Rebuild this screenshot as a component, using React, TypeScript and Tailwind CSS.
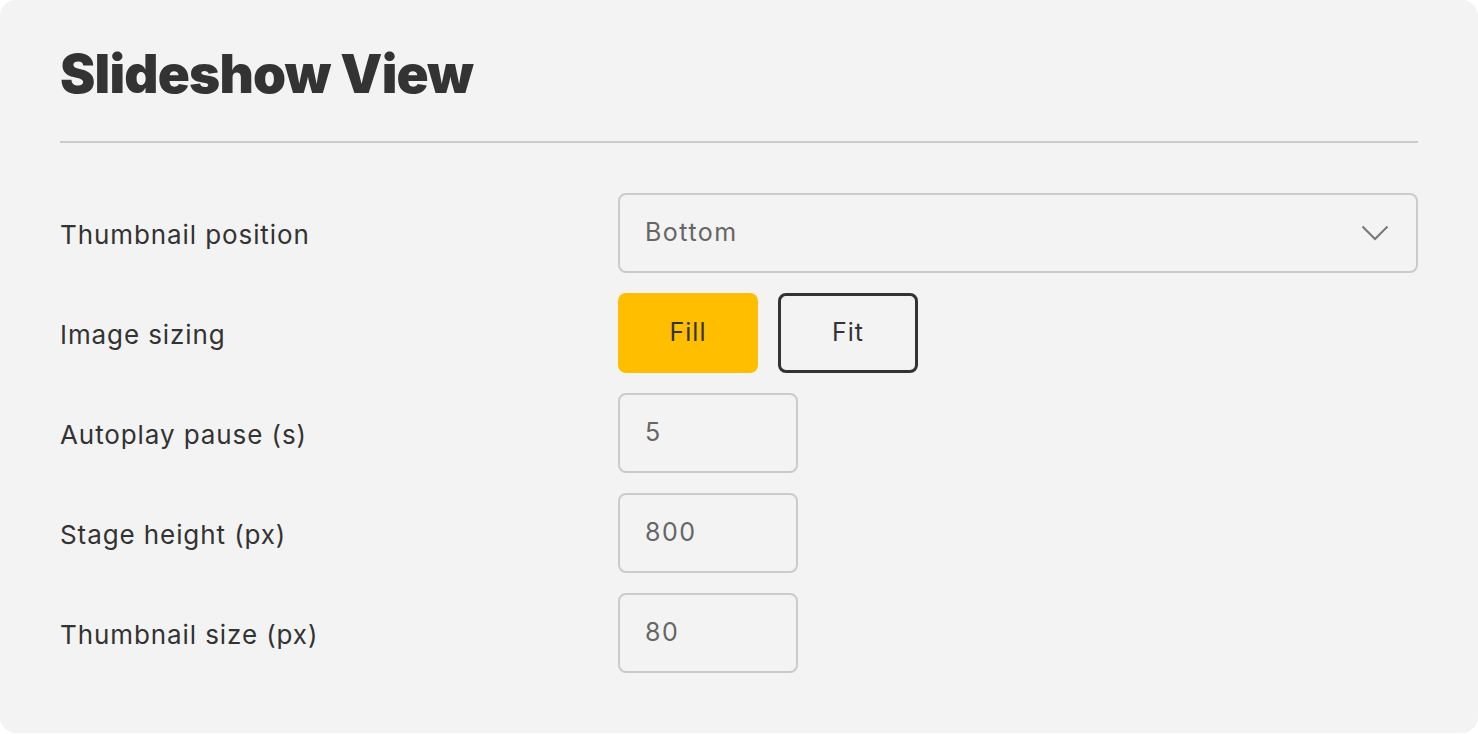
const ROWS = [
  { label: 'Autoplay pause (s)', value: '5' },
  { label: 'Stage height (px)', value: '800' },
  { label: 'Thumbnail size (px)', value: '80' },
]

function Chevron() {
  return (
    <svg width="28" height="16" viewBox="0 0 28 16" fill="none" className="text-[#777777]">
      <polyline points="1.5,1.5 14,14 26.5,1.5" stroke="currentColor" strokeWidth="2" />
    </svg>
  )
}

export default function App() {
  return (
    <div className="w-[1478px] h-[734px] bg-white font-['Inter',sans-serif]">
      <div className="h-[733px] rounded-2xl bg-[#f3f3f3] px-[60px] pt-[42px]">
        {/* Title */}
        <h1 className="text-[53px] leading-[64px] font-black tracking-[-0.015em] text-[#333333]">
          Slideshow View
        </h1>
        <div className="mt-[35px] h-[2px] bg-[#cbcbcb]" />

        {/* Settings */}
        <div className="mt-[50px] flex flex-col gap-5 text-[#333333] text-[25px] tracking-[0.04em]">
          <div className="flex items-center">
            <span className="mt-0.5 w-[558px] text-[26px] tracking-[0.035em]">Thumbnail position</span>
            <div className="flex h-[80px] flex-1 items-center justify-between rounded-lg border-2 border-[#cbcbcb] pl-[25px] pr-[27px] text-[#666666] tracking-[0.06em]">
              <span>Bottom</span>
              <Chevron />
            </div>
          </div>

          <div className="flex items-center">
            <span className="mt-0.5 w-[558px] text-[26px] tracking-[0.035em]">Image sizing</span>
            <div className="flex gap-5">
              <button className="h-[80px] w-[140px] rounded-lg bg-[#ffbf00] text-[#333333]">
                Fill
              </button>
              <button className="h-[80px] w-[140px] rounded-lg border-[3px] border-[#333333] text-[#333333]">
                Fit
              </button>
            </div>
          </div>

          {ROWS.map(r => (
            <div key={r.label} className="flex items-center">
              <span className="mt-0.5 w-[558px] text-[26px] tracking-[0.035em]">{r.label}</span>
              <div className="flex h-[80px] w-[180px] items-center rounded-lg border-2 border-[#cbcbcb] pl-[25px] text-[#666666] tracking-[0.06em]">
                {r.value}
              </div>
            </div>
          ))}
        </div>
      </div>
    </div>
  )
}
